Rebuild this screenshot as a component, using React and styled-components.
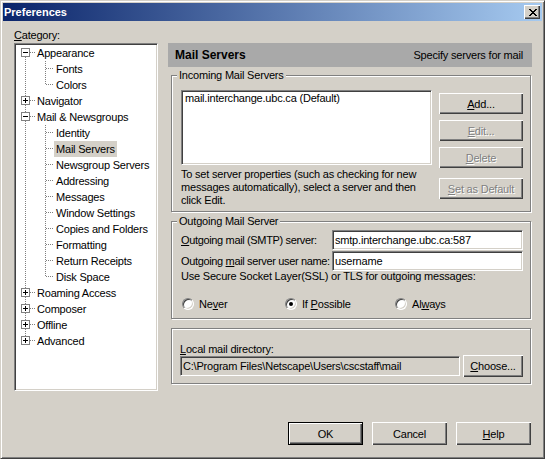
import React from "react";
import styled, { createGlobalStyle, css } from "styled-components";

const FACE = "#D4D0C8";

const GlobalStyle = createGlobalStyle`
  html, body {
    margin: 0;
    padding: 0;
    background: ${FACE};
  }
  body {
    font-family: "Liberation Sans", Arial, sans-serif;
    font-size: 11px;
    letter-spacing: -0.2px;
    color: #000;
  }
  * {
    box-sizing: border-box;
  }
`;

const sunken = css`
  border: 1px solid;
  border-color: #808080 #fff #fff #808080;
  box-shadow: inset 1px 1px #404040, inset -1px -1px ${FACE};
`;

const tree = [
	{ label: "Appearance", open: true, children: ["Fonts", "Colors"] },
	{ label: "Navigator" },
	{
		label: "Mail & Newsgroups",
		open: true,
		children: [
			"Identity",
			"Mail Servers",
			"Newsgroup Servers",
			"Addressing",
			"Messages",
			"Window Settings",
			"Copies and Folders",
			"Formatting",
			"Return Receipts",
			"Disk Space",
		],
	},
	{ label: "Roaming Access" },
	{ label: "Composer" },
	{ label: "Offline" },
	{ label: "Advanced" },
];

const flattenTree = () => {
	const rows = [];
	tree.forEach((node, i) => {
		rows.push({
			level: 0,
			label: node.label,
			open: !!node.open,
			first: i === 0,
			lastRoot: i === tree.length - 1,
		});
		if (node.open) {
			node.children.forEach((child, j) => {
				rows.push({
					level: 1,
					label: child,
					lastChild: j === node.children.length - 1,
				});
			});
		}
	});
	return rows;
};

const TreeGuide = ({ row }) => {
	const width = row.level === 0 ? 19 : 38;
	return (
		<svg width={width} height={16} shapeRendering="crispEdges">
			<g stroke="#808080" strokeDasharray="1 1">
				{row.level === 0 ? (
					<>
						{!row.first && <line x1="9.5" y1="0" x2="9.5" y2="3" />}
						{!row.lastRoot && <line x1="9.5" y1="12" x2="9.5" y2="16" />}
						<line x1="14" y1="7.5" x2="19" y2="7.5" />
					</>
				) : (
					<>
						<line x1="9.5" y1="0" x2="9.5" y2="16" />
						<line x1="29.5" y1="0" x2="29.5" y2={row.lastChild ? 8 : 16} />
						<line x1="30" y1="7.5" x2="38" y2="7.5" />
					</>
				)}
			</g>
			{row.level === 0 && (
				<g>
					<rect x="5.5" y="3.5" width="8" height="8" fill="#fff" stroke="#808080" />
					<line x1="7" y1="7.5" x2="12" y2="7.5" stroke="#000" />
					{!row.open && <line x1="9.5" y1="5" x2="9.5" y2="10" stroke="#000" />}
				</g>
			)}
		</svg>
	);
};

const App = () => {
	const rows = flattenTree();

	return (
		<>
			<GlobalStyle />
			<Window>
				<TitleBar>
					<Title>Preferences</Title>
					<CloseButton>
						<svg width="8" height="7" shapeRendering="crispEdges">
							<path d="M0 0h2l2 2.5L6 0h2L5 3.5 8 7H6L4 4.5 2 7H0l3-3.5z" fill="#000" />
						</svg>
					</CloseButton>
				</TitleBar>

				<Body>
					<Main>
						<LeftColumn>
							<Label>
								<u>C</u>ategory:
							</Label>
							<Tree>
								{rows.map((row) => (
									<TreeRow key={row.label}>
										<TreeGuide row={row} />
										<TreeLabel $selected={row.label === "Mail Servers"}>
											{row.label}
										</TreeLabel>
									</TreeRow>
								))}
							</Tree>
						</LeftColumn>

						<RightColumn>
							<Header>
								<HeaderTitle>Mail Servers</HeaderTitle>
								<span>Specify servers for mail</span>
							</Header>

							<GroupBox $top={8} $pad="14px 7px 4px 9px">
								<Legend>Incoming Mail Servers</Legend>
								<IncomingGrid>
									<div>
										<ListBox>
											<ListItem>mail.interchange.ubc.ca (Default)</ListItem>
										</ListBox>
										<HelpText>
											To set server properties (such as checking for new
											<br />
											messages automatically), select a server and then
											<br />
											click Edit.
										</HelpText>
									</div>
									<ButtonStack>
										<Button $h={21}>
											<u>A</u>dd...
										</Button>
										<Button $h={21} disabled>
											<u>E</u>dit...
										</Button>
										<Button $h={21} disabled>
											<u>D</u>elete
										</Button>
										<Button $h={21} $gapAbove={4} disabled>
											<u>S</u>et as Default
										</Button>
									</ButtonStack>
								</IncomingGrid>
							</GroupBox>

							<GroupBox $top={9} $pad="8px 7px 7px 9px">
								<Legend>Outgoing Mail Server</Legend>
								<FieldGrid>
									<FieldLabel>
										<u>O</u>utgoing mail (SMTP) server:
									</FieldLabel>
									<TextInput defaultValue="smtp.interchange.ubc.ca:587" />
									<FieldLabel>
										Outgoing <u>m</u>ail server user name:
									</FieldLabel>
									<TextInput defaultValue="username" />
								</FieldGrid>
								<Line>Use Secure Socket Layer(SSL) or TLS for outgoing messages:</Line>
								<RadioRow>
									<Radio>
										<RadioCircle />
										<span>
											Ne<u>v</u>er
										</span>
									</Radio>
									<Radio>
										<RadioCircle $checked />
										<span>
											If <u>P</u>ossible
										</span>
									</Radio>
									<Radio>
										<RadioCircle />
										<span>
											Al<u>w</u>ays
										</span>
									</Radio>
								</RadioRow>
							</GroupBox>

							<GroupBox $top={9} $pad="15px 7px 6px 8px">
								<Line>
									<u>L</u>ocal mail directory:
								</Line>
								<DirRow>
									<PathField>C:\Program Files\Netscape\Users\cscstaff\mail</PathField>
									<Button $h={22}>
										<u>C</u>hoose...
									</Button>
								</DirRow>
							</GroupBox>
						</RightColumn>
					</Main>

					<Footer>
						<Button $w={75} $h={23} $default>
							OK
						</Button>
						<Button $w={75} $h={23}>
							Cancel
						</Button>
						<Button $w={75} $h={23}>
							<u>H</u>elp
						</Button>
					</Footer>
				</Body>
			</Window>
		</>
	);
};

export default App;

const Window = styled.div`
	width: 545px;
	height: 459px;
	display: flex;
	flex-direction: column;
	padding: 2px;
	background: ${FACE};
	border: 1px solid;
	border-color: ${FACE} #404040 #404040 ${FACE};
	box-shadow: inset 1px 1px #fff, inset -1px -1px #808080;
`;

const TitleBar = styled.div`
	height: 18px;
	flex: none;
	display: flex;
	align-items: center;
	justify-content: space-between;
	padding: 0 2px 0 1px;
	background: linear-gradient(to right, #0a246a, #a6caf0);
`;

const Title = styled.span`
	color: #fff;
	font-weight: bold;
	font-size: 11px;
	letter-spacing: 0;
`;

const CloseButton = styled.div`
	width: 16px;
	height: 14px;
	display: flex;
	align-items: center;
	justify-content: center;
	background: ${FACE};
	box-shadow: inset 1px 1px #fff, inset -1px -1px #404040, inset -2px -2px #808080;
	padding-left: 1px;
`;

const Body = styled.div`
	flex: 1;
	display: flex;
	flex-direction: column;
	padding: 8px 10px 0 11px;
`;

const Main = styled.div`
	display: flex;
	gap: 10px;
`;

const LeftColumn = styled.div`
	width: 144px;
	flex: none;
	display: flex;
	flex-direction: column;
`;

const Label = styled.div`
	line-height: 13px;
	margin-bottom: 1px;
`;

const Tree = styled.div`
	height: 348px;
	background: #fff;
	${sunken};
	padding: 1px 0 0 1px;
`;

const TreeRow = styled.div`
	height: 16px;
	display: flex;
	align-items: center;

	svg {
		flex: none;
		display: block;
	}
`;

const TreeLabel = styled.span`
	line-height: 16px;
	padding: 0 2px;
	white-space: nowrap;
	background: ${(p) => (p.$selected ? FACE : "transparent")};
`;

const RightColumn = styled.div`
	flex: 1;
	display: flex;
	flex-direction: column;
	padding-top: 14px;
`;

const Header = styled.div`
	height: 24px;
	display: flex;
	align-items: center;
	justify-content: space-between;
	padding: 0 9px 0 7px;
	background: #a9a9a9;
`;

const HeaderTitle = styled.span`
	font-weight: bold;
	font-size: 12px;
	letter-spacing: 0;
`;

const GroupBox = styled.div`
	position: relative;
	margin: ${(p) => p.$top}px 1px 0 3px;
	padding: ${(p) => p.$pad};
	border: 1px solid #808080;
	box-shadow: inset 1px 1px #fff, 1px 1px #fff;
`;

const Legend = styled.span`
	position: absolute;
	top: -7px;
	left: 5px;
	padding: 0 2px;
	line-height: 13px;
	background: ${FACE};
`;

const IncomingGrid = styled.div`
	display: grid;
	grid-template-columns: 1fr 84px;
	gap: 7px;
`;

const ListBox = styled.div`
	height: 75px;
	background: #fff;
	${sunken};
	padding: 1px 3px;
`;

const ListItem = styled.div`
	line-height: 13px;
`;

const HelpText = styled.div`
	margin-top: 3px;
	line-height: 13px;
	white-space: nowrap;
`;

const ButtonStack = styled.div`
	display: flex;
	flex-direction: column;
	gap: 6px;
	padding-top: 3px;
`;

const Button = styled.button`
	width: ${(p) => (p.$w ? `${p.$w}px` : "auto")};
	height: ${(p) => p.$h}px;
	margin-top: ${(p) => p.$gapAbove || 0}px;
	padding: 0 4px;
	font-family: inherit;
	font-size: 11px;
	letter-spacing: inherit;
	color: #000;
	background: ${FACE};
	border: ${(p) => (p.$default ? "1px solid #000" : "none")};
	box-shadow: inset 1px 1px #fff, inset -1px -1px #404040, inset -2px -2px #808080;
	white-space: nowrap;

	&:disabled {
		color: #808080;
		text-shadow: 1px 1px #fff;
	}
`;

const FieldGrid = styled.div`
	display: grid;
	grid-template-columns: 151px 1fr;
	row-gap: 1px;
	align-items: center;
`;

const FieldLabel = styled.span`
	white-space: nowrap;
	letter-spacing: -0.35px;
`;

const TextInput = styled.input`
	height: 20px;
	width: 100%;
	padding: 0 2px;
	font-family: inherit;
	font-size: 11px;
	letter-spacing: inherit;
	color: #000;
	background: #fff;
	${sunken};
	outline: none;
`;

const Line = styled.div`
	line-height: 13px;
	margin-top: -1px;
	white-space: nowrap;
`;

const RadioRow = styled.div`
	display: grid;
	grid-template-columns: 103px 110px 1fr;
	margin-top: 14px;
	padding-left: 1px;
`;

const Radio = styled.label`
	display: flex;
	align-items: center;
	gap: 5px;
	height: 14px;
	line-height: 14px;
`;

const RadioCircle = styled.span`
	position: relative;
	flex: none;
	width: 12px;
	height: 12px;
	border-radius: 50%;
	background: #fff;
	border: 1px solid;
	border-color: #808080 #fff #fff #808080;
	box-shadow: inset 1px 1px #404040, inset -1px -1px ${FACE};

	${(p) =>
		p.$checked &&
		css`
			&::after {
				content: "";
				position: absolute;
				left: 3px;
				top: 3px;
				width: 4px;
				height: 4px;
				border-radius: 50%;
				background: #000;
			}
		`}
`;

const DirRow = styled.div`
	display: grid;
	grid-template-columns: 1fr 60px;
	gap: 3px;
	align-items: center;
	margin-top: -1px;
`;

const PathField = styled.div`
	height: 20px;
	line-height: 18px;
	padding: 0 2px;
	white-space: nowrap;
	overflow: hidden;
	background: ${FACE};
	${sunken};
`;

const Footer = styled.div`
	display: flex;
	justify-content: flex-end;
	gap: 9px;
	margin-top: 31px;
	margin-right: 1px;
`;
